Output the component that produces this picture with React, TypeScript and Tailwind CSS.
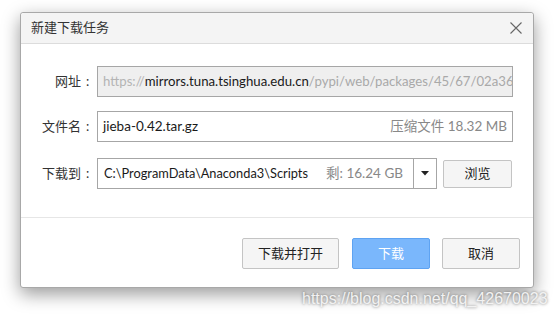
import React from "react";

const font = { fontFamily: 'Lato, "Noto Sans CJK SC", sans-serif' };

function Label({ text }: { text: string }) {
  return (
    <div className="w-[73px] flex justify-end text-[13px] text-[#333]">
      <span>{text}</span>
      <span className="w-[13px] text-center">:</span>
    </div>
  );
}

export default function App() {
  return (
    <div className="w-[555px] h-[318px] bg-white relative overflow-hidden" style={font}>
      <div className="ml-[20px] mt-[12px] w-[514px] h-[276px] flex flex-col bg-white border border-[#a8a8a8] rounded-[3px] shadow-[0_6px_18px_rgba(0,0,0,0.4)]">
        <div className="h-[31px] flex items-center justify-between bg-[#f4f4f4] border-b border-[#dcdcdc] pl-[10px] pr-[11px] rounded-t-[3px]">
          <span className="text-[13px] text-[#333]">新建下载任务</span>
          <svg width="12" height="12" viewBox="0 0 12 12">
            <path d="M0.5 0.5 L11.5 11.5 M11.5 0.5 L0.5 11.5" stroke="#666" strokeWidth="1.1" fill="none" />
          </svg>
        </div>
        <div className="flex flex-col pt-[22px] pr-[20px]">
          <div className="flex items-center">
            <Label text="网址" />
            <div className="ml-[3px] flex-1 min-w-0 h-[31px] border border-[#a6a6a6] bg-[#efefef] flex items-center px-[5px] overflow-hidden whitespace-nowrap text-[13.2px]">
              <span className="text-[#b4b4b4]">https://</span>
              <span className="text-[#1a1a1a]">mirrors.tuna.tsinghua.edu.cn</span>
              <span className="text-[#a9a9a9]">/pypi/web/packages/45/67/02a36c</span>
            </div>
          </div>
          <div className="flex items-center mt-[14px]">
            <Label text="文件名" />
            <div className="ml-[3px] flex-1 h-[31px] border border-[#a6a6a6] bg-white flex items-center justify-between px-[5px] text-[13.5px] whitespace-nowrap">
              <span className="text-[#1a1a1a]">jieba-0.42.tar.gz</span>
              <span className="text-[#888]">压缩文件 18.32 MB</span>
            </div>
          </div>
          <div className="flex items-center mt-[16px]">
            <Label text="下载到" />
            <div className="ml-[3px] w-[340px] h-[31px] border border-[#a6a6a6] bg-white flex items-center whitespace-nowrap">
              <div className="flex-1 flex items-center justify-between pl-[6px] pr-[10px]">
                <span className="text-[#1a1a1a] text-[12.8px]">C:\ProgramData\Anaconda3\Scripts</span>
                <span className="text-[#888] text-[13.5px]">剩: 16.24 GB</span>
              </div>
              <div className="w-[23px] h-full border-l border-[#a6a6a6] flex items-center justify-center">
                <svg width="8" height="5" viewBox="0 0 8 5">
                  <path d="M0 0 L8 0 L4 4.5 Z" fill="#222" />
                </svg>
              </div>
            </div>
            <div className="ml-[6px] w-[69px] h-[28px] border border-[#c4c4c4] bg-[#f5f5f5] rounded-[2px] flex items-center justify-center text-[13px] text-[#222]">
              浏览
            </div>
          </div>
        </div>
        <div className="mt-[28px] border-t border-[#e6e6e6]" />
        <div className="flex justify-end items-center pt-[20px] pr-[13px]">
          <div className="w-[97px] h-[31px] border border-[#c4c4c4] bg-[#f5f5f5] rounded-[2px] flex items-center justify-center text-[13px] text-[#222]">
            下载并打开
          </div>
          <div className="ml-[13px] w-[78px] h-[31px] border border-[#5ea3f2] bg-[#7ab7fc] rounded-[2px] flex items-center justify-center text-[13px] text-white">
            下载
          </div>
          <div className="ml-[12px] w-[78px] h-[31px] border border-[#c4c4c4] bg-[#f5f5f5] rounded-[2px] flex items-center justify-center text-[13px] text-[#222]">
            取消
          </div>
        </div>
      </div>
      <div
        className="absolute left-[302px] top-[287px] text-[16px] text-[#f2f2f2] whitespace-nowrap [text-shadow:0_0_3px_rgba(0,0,0,0.55)]"
        style={{ fontFamily: '"Liberation Sans", Arial, sans-serif' }}
      >
        https://blog.csdn.net/qq_42670023
      </div>
    </div>
  );
}
